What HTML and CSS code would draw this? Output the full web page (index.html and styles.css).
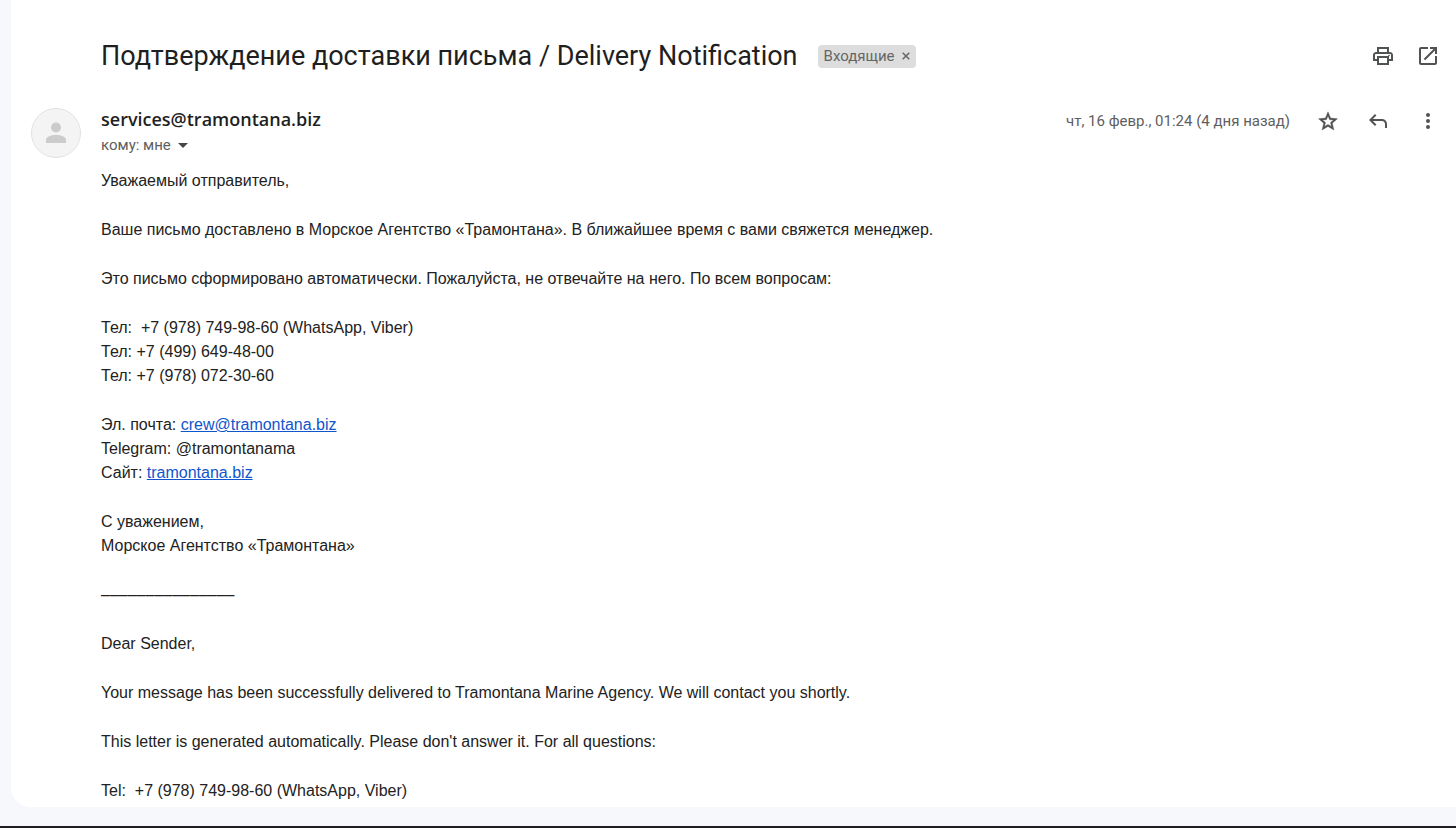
FILE: index.html
```html
<!DOCTYPE html>
<html lang="ru">
<head>
<meta charset="utf-8">
<meta name="viewport" content="width=device-width, initial-scale=1">
<title>Подтверждение доставки письма / Delivery Notification</title>
<link rel="stylesheet" href="styles.css">
</head>
<body>
<main class="mail">
  <header class="subject">
    <h1 class="subject-title">Подтверждение доставки письма / Delivery Notification</h1>
    <span class="label">Входящие
      <button class="label-remove" type="button" aria-label="Удалить ярлык">
        <svg class="cross" viewBox="0 0 8 8" aria-hidden="true"><path d="M.7.7l6.600 6.600M7.300.7L.7 7.300"/></svg>
      </button>
    </span>
    <div class="subject-actions">
      <button class="icon-button" type="button" aria-label="Печать">
        <svg class="icon" viewBox="0 0 24 24" aria-hidden="true"><path d="M19 8h-1V3H6v5H5c-1.660 0-3 1.340-3 3v6h4v4h12v-4h4v-6c0-1.660-1.340-3-3-3zM8 5h8v3H8V5zm8 14H8v-5h8v5zm2-4v-3H6v3H4v-4c0-.55.45-1 1-1h14c.55 0 1 .45 1 1v4h-2z"/><circle cx="18" cy="11.500" r=".8"/></svg>
      </button>
      <button class="icon-button" type="button" aria-label="В новом окне">
        <svg class="icon" viewBox="0 0 24 24" aria-hidden="true"><path d="M19 19H5V5h7V3H5c-1.110 0-2 .9-2 2v14c0 1.100.89 2 2 2h14c1.100 0 2-.9 2-2v-7h-2v7zM14 3v2h3.590l-9.830 9.830 1.410 1.410L19 6.410V10h2V3h-7z"/></svg>
      </button>
    </div>
  </header>

  <article class="message">
    <div class="avatar">
      <svg class="avatar-person" viewBox="0 0 20 22" aria-hidden="true"><circle cx="10" cy="5.500" r="5"/><path d="M0 21v-3c0-3.300 5-5 10-5s10 1.700 10 5v3z"/></svg>
    </div>
    <div class="message-main">
      <header class="message-head">
        <div class="sender">
          <h2 class="sender-name">services@tramontana.biz</h2>
          <button class="recipient" type="button">кому: мне
            <svg class="caret" viewBox="0 0 10 5" aria-hidden="true"><path d="M0 0h10L5 5z"/></svg>
          </button>
        </div>
        <div class="message-actions">
          <time class="date" datetime="2023-02-16T01:24">чт, 16 февр., 01:24 (4 дня назад)</time>
          <button class="icon-button" type="button" aria-label="Пометить">
            <svg class="icon icon-bold" viewBox="0 0 24 24" aria-hidden="true"><path d="M21.500 9.700l-6.900-.6L12 2.800 9.400 9.100l-6.900.6 5.200 4.500L6.100 21 12 17.400l5.900 3.600-1.600-6.800 5.200-4.500zM12 15.400l-3.400 2 .9-3.800-3-2.600 3.900-.3L12 7.100l1.600 3.600 3.900.3-3 2.600.9 3.800z"/></svg>
          </button>
          <button class="icon-button" type="button" aria-label="Ответить">
            <svg class="icon" viewBox="0 0 24 24" aria-hidden="true"><path d="M19 19v-4c0-1.660-1.340-3-3-3H6.830l3.580 3.590L9 17l-6-6 6-6 1.410 1.410L6.830 10H16c2.760 0 5 2.240 5 5v4h-2z"/></svg>
          </button>
          <button class="icon-button" type="button" aria-label="Ещё">
            <svg class="icon" viewBox="0 0 24 24" aria-hidden="true"><circle cx="12" cy="6" r="2"/><circle cx="12" cy="12" r="2"/><circle cx="12" cy="18" r="2"/></svg>
          </button>
        </div>
      </header>
      <div class="message-body">
        <p>Уважаемый отправитель,</p>
        <p>Ваше письмо доставлено в Морское Агентство «Трамонтана». В ближайшее время с вами свяжется менеджер.</p>
        <p>Это письмо сформировано автоматически. Пожалуйста, не отвечайте на него. По всем вопросам:</p>
        <p>Тел:&nbsp; +7 (978) 749-98-60 (WhatsApp, Viber)<br>Тел: +7 (499) 649-48-00<br>Тел: +7 (978) 072-30-60</p>
        <p>Эл. почта: <a href="mailto:crew@tramontana.biz">crew@tramontana.biz</a><br>Telegram: @tramontanama<br>Сайт: <a href="http://tramontana.biz">tramontana.biz</a></p>
        <p>С уважением,<br>Морское Агентство «Трамонтана»</p>
        <p>–––––––––––––––</p>
        <p>Dear Sender,</p>
        <p>Your message has been successfully delivered to Tramontana Marine Agency. We will contact you shortly.</p>
        <p>This letter is generated automatically. Please don't answer it. For all questions:</p>
        <p>Tel:&nbsp; +7 (978) 749-98-60 (WhatsApp, Viber)</p>
      </div>
    </div>
  </article>
</main>
</body>
</html>
```
FILE: styles.css
```css
* {
  box-sizing: border-box;
}

body {
  display: flex;
  flex-direction: column;
  min-height: 100vh;
  margin: 0;
  padding: 0 0 19px 11px;
  border-bottom: 2px solid #1f1f1f;
  background: #f6f8fc;
  color: #222;
  font-family: Roboto, "Noto Sans", sans-serif;
}

button {
  padding: 0;
  border: 0;
  background: none;
  color: inherit;
  font: inherit;
  cursor: pointer;
}

.mail {
  flex: 1;
  padding: 36px 16px 4px 20px;
  border-bottom-left-radius: 20px;
  background: #fff;
}

.subject {
  display: flex;
  align-items: center;
  min-height: 40px;
  padding-left: 70px;
}

.subject-title {
  margin: 0;
  color: #1f1f1f;
  font-size: 27px;
  font-weight: 400;
  line-height: 40px;
}

.label {
  display: flex;
  align-items: center;
  gap: 7px;
  height: 23px;
  margin-left: 20px;
  padding: 0 6px;
  border-radius: 4px;
  background: #ddd;
  color: #666;
  font-size: 15px;
}

.label-remove {
  display: flex;
}

.cross {
  width: 8px;
  height: 8px;
  fill: none;
  stroke: #666;
  stroke-width: 1.5;
}

.subject-actions {
  display: flex;
  gap: 21px;
  margin-left: auto;
}

.icon-button {
  display: flex;
}

.icon {
  width: 24px;
  height: 24px;
  fill: #505352;
}

.icon-bold {
  stroke: #505352;
  stroke-width: 0.4;
}

.message {
  display: flex;
  gap: 20px;
  margin-top: 32px;
}

.avatar {
  display: flex;
  flex: none;
  align-items: center;
  justify-content: center;
  width: 50px;
  height: 50px;
  border: 1px solid #e2e2e2;
  border-radius: 50%;
  background: #f4f4f4;
}

.avatar-person {
  width: 20px;
  height: 22px;
  fill: #ccc;
}

.message-main {
  flex: 1;
}

.message-head {
  display: flex;
  justify-content: space-between;
  height: 61px;
}

.sender-name {
  margin: 0;
  color: #1f1f1f;
  font-family: "Open Sans", sans-serif;
  font-size: 18px;
  font-weight: 600;
  line-height: 22px;
}

.recipient {
  display: flex;
  align-items: center;
  gap: 7px;
  color: #5e5e5e;
  font-size: 15px;
  line-height: 30px;
}

.caret {
  width: 10px;
  height: 5px;
  fill: #444746;
}

.message-actions {
  display: flex;
  align-items: center;
  height: 26px;
  gap: 26px;
}

.date {
  color: #5e5e5e;
  font-size: 15px;
  line-height: 24px;
}

.message-body {
  font-family: "Liberation Sans", Arial, sans-serif;
  font-size: 16px;
  line-height: 24px;
}

.message-body p {
  margin: 0 0 25px;
}

.message-body p:last-child {
  margin-bottom: 0;
}

.message-body a {
  color: #15c;
}
```
